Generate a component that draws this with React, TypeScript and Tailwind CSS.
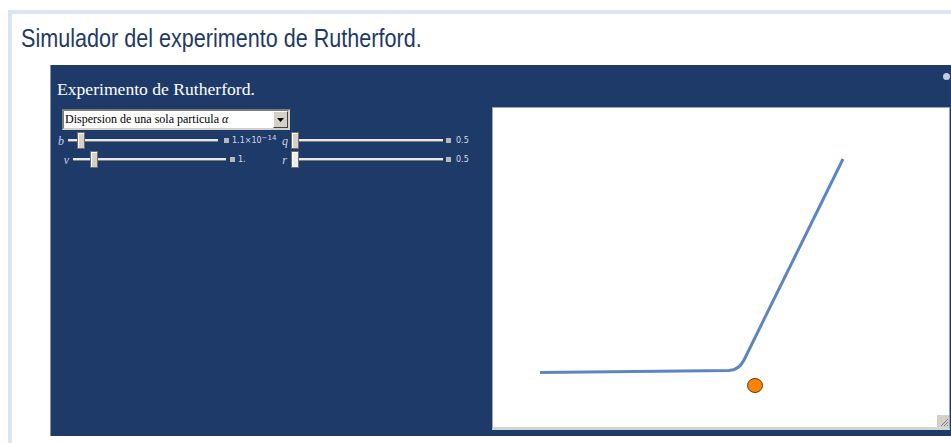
import React from "react";

type SliderProps = {
  label: string;
  labelW: string;
  trackW: string;
  thumbLeft: number;
  value: React.ReactNode;
  squareGap: string;
  valueGap: string;
  light?: boolean;
};

// Mathematica-style manipulator slider
const Slider = ({ label, labelW, trackW, thumbLeft, value, squareGap, valueGap, light }: SliderProps) => (
  <div className="flex items-center h-[17px]">
    <span
      className={`${labelW} text-right pr-[4px] italic text-[12px] leading-none text-[#c9d3e6]`}
      style={{ fontFamily: '"Liberation Serif", serif' }}
    >
      {label}
    </span>
    <div className={`relative ${trackW} h-[17px] flex items-center`}>
      <div className="w-full h-[3px] bg-[#e8e8e8] border-b border-[#7d7d7d]" />
      <div
        className={`absolute top-0 w-[8px] h-[17px] border border-[#6f6f6f] ${
          light ? "bg-[#eeeeee]" : "bg-[#d6d2ca]"
        } shadow-[inset_1px_1px_0_#ffffff]`}
        style={{ left: thumbLeft }}
      />
    </div>
    <div className={`${squareGap} w-[5px] h-[5px] bg-[#b8b8b8]`} />
    <span
      className={`${valueGap} text-[8px] leading-none text-[#d5dcea] whitespace-nowrap`}
      style={{ fontFamily: '"DejaVu Sans", sans-serif' }}
    >
      {value}
    </span>
  </div>
);

const Plot = () => (
  <div className="relative w-[458px] h-[323px] bg-white border border-[#9aa4b4] border-b-[3px] border-b-[#d4d4d4]">
    <svg width="456" height="319" className="block">
      <path
        d="M47 264.5 L236 262.6 Q246 262 251 252 L350 51"
        fill="none"
        stroke="#5d86c1"
        strokeWidth="3"
      />
      <ellipse cx="262" cy="277.5" rx="7.5" ry="7" fill="#ff8200" stroke="#5a3a1a" strokeWidth="1" />
    </svg>
    {/* resize grip */}
    <div className="absolute right-0 bottom-0 w-[12px] h-[12px] bg-[#d4d0c8]">
      <svg width="12" height="12">
        <path d="M11 4 L4 11 M11 7 L7 11 M11 10 L10 11" stroke="#808080" strokeWidth="1" />
      </svg>
    </div>
  </div>
);

export default function App() {
  return (
    <div className="w-[951px] h-[443px] overflow-hidden bg-white pt-[10px] pl-[8px]">
      <div className="w-[1000px] border-l-4 border-t-4 border-[#dce3f3] pl-[9px] pt-[9px] pb-[20px]">
        <h1
          className="inline-block origin-left scale-x-[0.83] whitespace-nowrap text-[26px] leading-[30px] text-[#1f3a68]"
          style={{ fontFamily: '"Liberation Sans", Arial, sans-serif' }}
        >
          Simulador del experimento de Rutherford.
        </h1>

        <div className="relative mt-[12px] ml-[29px] w-[920px] bg-[#1e3a68] border-l border-[#8a96a8] pl-[6px] pt-[14px] pb-[6px]">
          <span className="absolute left-[892px] top-[8px] w-[7px] h-[7px] rounded-full bg-[#c8ccd4]" />
          <h2
            className="text-[17.6px] leading-[20px] text-white"
            style={{ fontFamily: '"Liberation Serif", serif' }}
          >
            Experimento de Rutherford.
          </h2>

          <div className="flex mt-[8px]">
            <div className="w-[435px] pt-[2px]">
              {/* select */}
              <div className="ml-[5px] w-[228px] h-[21px] flex bg-white border-2 border-t-[#7d7d7d] border-l-[#7d7d7d] border-b-[#d4d0c8] border-r-[#d4d0c8]">
                <span
                  className="flex-1 pl-[1px] text-[12px] leading-[17px] text-black"
                  style={{ fontFamily: '"Liberation Serif", serif' }}
                >
                  Dispersion de una sola particula <i>α</i>
                </span>
                <span className="w-[15px] h-[17px] bg-[#d4d0c8] border border-t-white border-l-white border-b-[#404040] border-r-[#404040] flex items-center justify-center">
                  <svg width="7" height="4">
                    <path d="M0 0 L7 0 L3.5 4 Z" fill="#000" />
                  </svg>
                </span>
              </div>

              <div className="flex flex-col gap-[2px] mt-[2px]">
                <div className="flex">
                  <div className="w-[225px]">
                    <Slider
                      label="b"
                      labelW="w-[11px]"
                      trackW="w-[150px]"
                      thumbLeft={9}
                      squareGap="ml-[6px]"
                      valueGap="ml-[3px]"
                      value={
                        <>
                          1.1×10<sup className="text-[7px] relative -top-[3px]">−14</sup>
                        </>
                      }
                    />
                  </div>
                  <Slider
                    label="q"
                    labelW="w-[9px]"
                    trackW="w-[152px]"
                    thumbLeft={0}
                    squareGap="ml-[3px]"
                    valueGap="ml-[5px]"
                    value="0.5"
                  />
                </div>
                <div className="flex">
                  <div className="w-[225px]">
                    <Slider
                      label="v"
                      labelW="w-[16px]"
                      trackW="w-[153px]"
                      thumbLeft={17}
                      squareGap="ml-[4px]"
                      valueGap="ml-[3px]"
                      value="1."
                    />
                  </div>
                  <Slider
                    label="r"
                    labelW="w-[9px]"
                    trackW="w-[152px]"
                    thumbLeft={0}
                    squareGap="ml-[3px]"
                    valueGap="ml-[5px]"
                    value="0.5"
                    light
                  />
                </div>
              </div>
            </div>
            <Plot />
          </div>
        </div>
      </div>
    </div>
  );
}
